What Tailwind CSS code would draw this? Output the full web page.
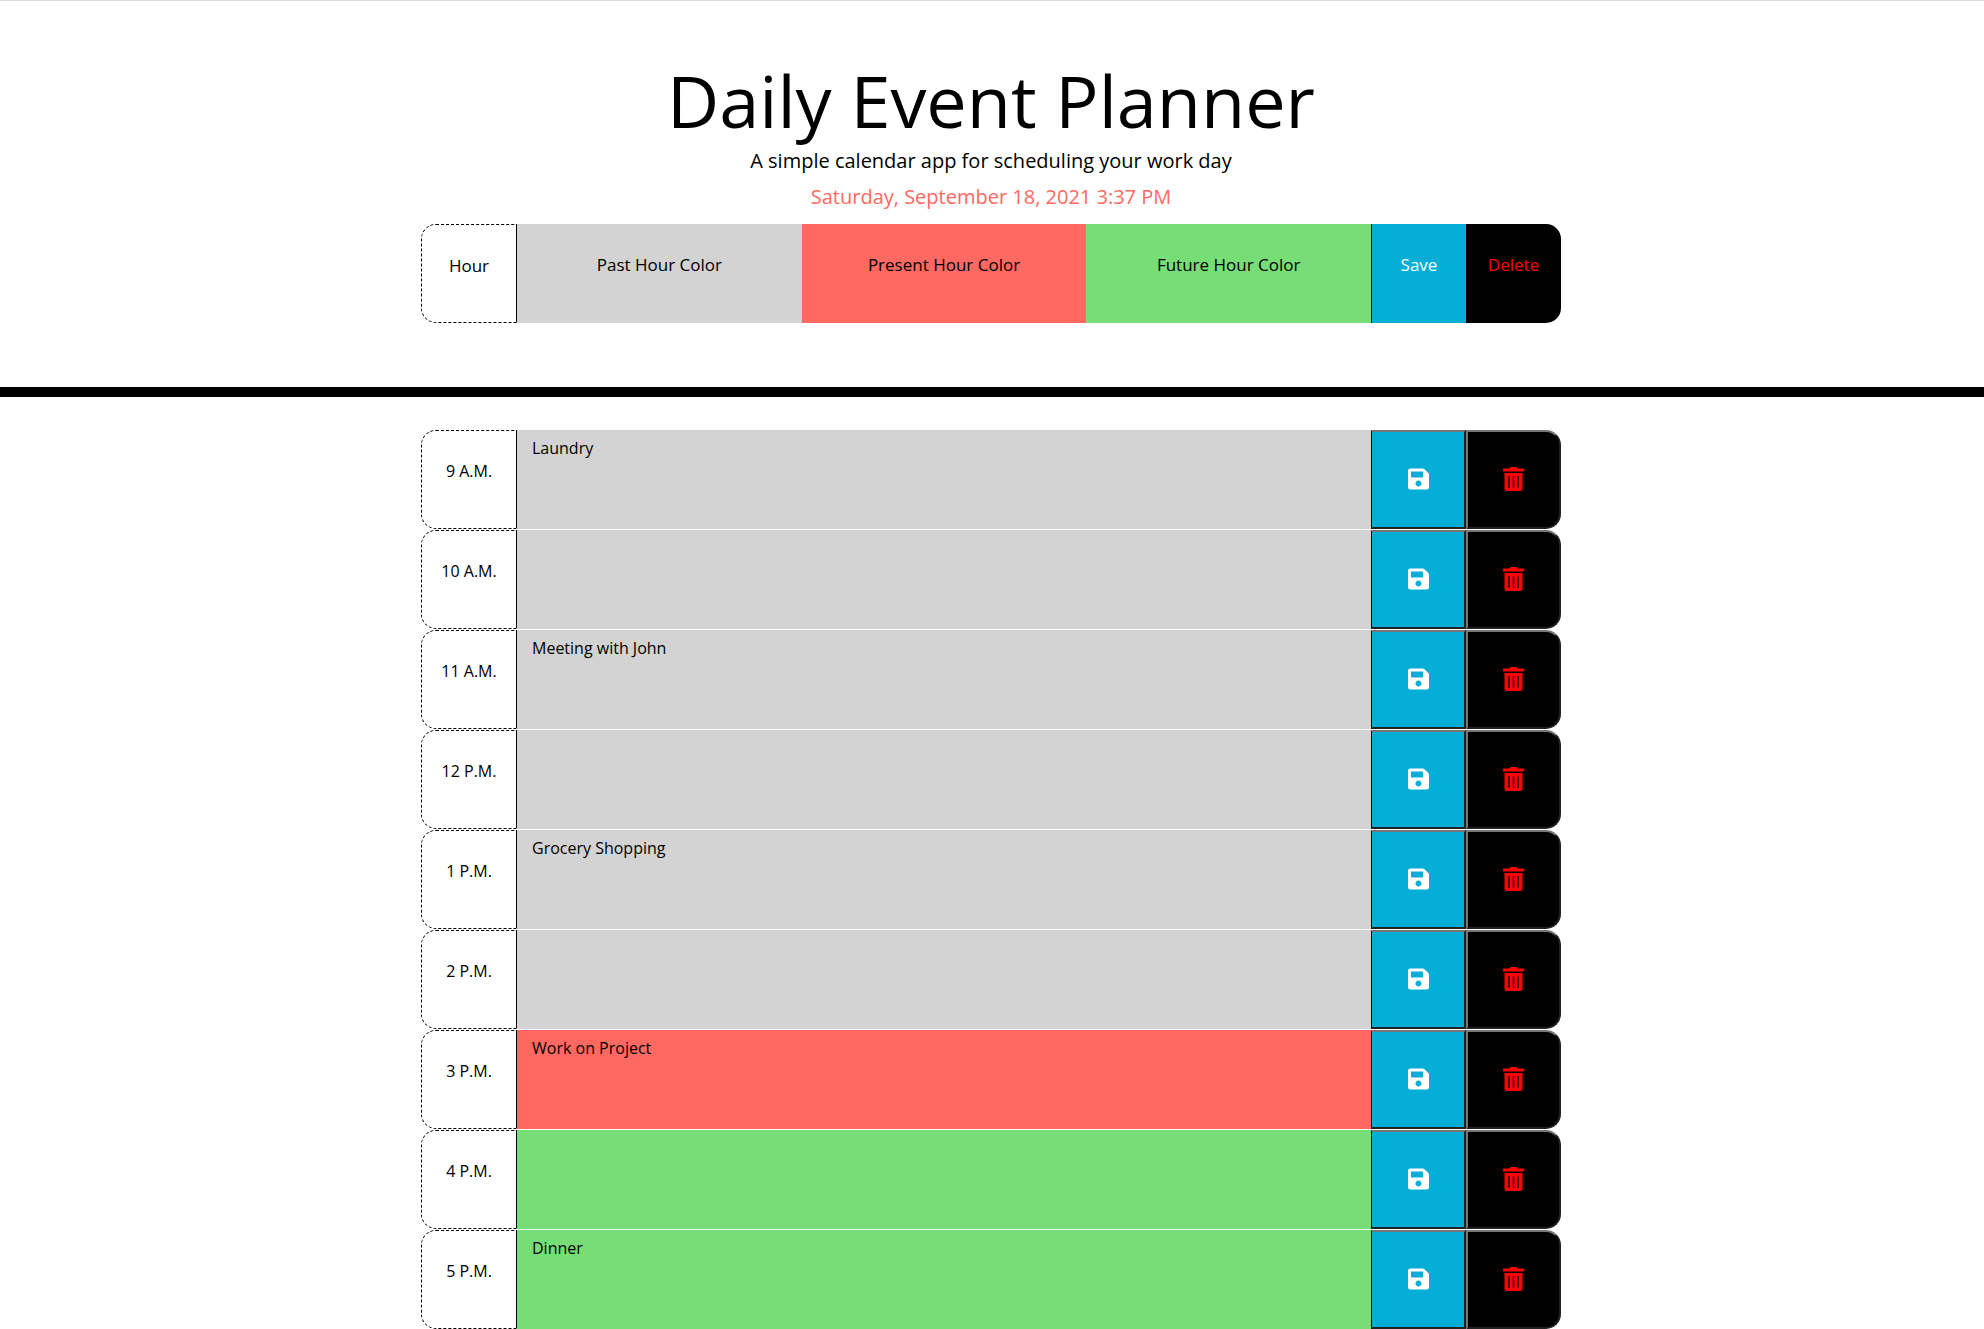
<!DOCTYPE html>
<html lang="en">
<head>
<meta charset="utf-8">
<meta name="viewport" content="width=device-width, initial-scale=1">
<title>Daily Event Planner</title>
<script src="https://cdn.jsdelivr.net/npm/@tailwindcss/browser@4"></script>
</head>
<body class="bg-white text-black font-['Open_Sans',sans-serif] text-base">
<svg class="hidden" aria-hidden="true">
  <symbol id="save" viewBox="0 0 448 512"><path d="M433.941 129.941l-83.882-83.882A48 48 0 0 0 316.118 32H48C21.49 32 0 53.49 0 80v352c0 26.51 21.49 48 48 48h352c26.51 0 48-21.49 48-48V163.882a48 48 0 0 0-14.059-33.941zM224 416c-35.346 0-64-28.654-64-64 0-35.346 28.654-64 64-64s64 28.654 64 64c0 35.346-28.654 64-64 64zm96-304.52V212c0 6.627-5.373 12-12 12H76c-6.627 0-12-5.373-12-12V108c0-6.627 5.373-12 12-12h228.52c3.183 0 6.235 1.264 8.485 3.515l3.48 3.48A11.996 11.996 0 0 1 320 111.48z"/></symbol>
  <symbol id="trash" viewBox="0 0 448 512"><path d="M32 464a48 48 0 0 0 48 48h288a48 48 0 0 0 48-48V128H32zm272-256a16 16 0 0 1 32 0v224a16 16 0 0 1-32 0zm-96 0a16 16 0 0 1 32 0v224a16 16 0 0 1-32 0zm-96 0a16 16 0 0 1 32 0v224a16 16 0 0 1-32 0zM432 32H312l-9.4-18.7A24 24 0 0 0 281.1 0H166.8a23.72 23.72 0 0 0-21.4 13.3L136 32H16A16 16 0 0 0 0 48v32a16 16 0 0 0 16 16h416a16 16 0 0 0 16-16V48a16 16 0 0 0-16-16z"/></symbol>
</svg>
<header class="border-t border-t-[#dadce0] border-b-[10px] border-b-black pt-[63px] pb-16 pl-4 pr-[18px] text-center">
  <h1 class="text-7xl leading-[72px]">Daily Event Planner</h1>
  <p class="mt-[10px] text-xl leading-[30px]">A simple calendar app for scheduling your work day</p>
  <p class="mt-[6px] text-xl leading-[30px] text-[#ff6961]">Saturday, September 18, 2021 3:37 PM</p>
  <div class="mx-auto mt-3 grid h-[99px] max-w-[1140px] grid-cols-[96px_repeat(3,1fr)_95px_95px] text-[17px] leading-6">
    <div class="rounded-l-[15px] border border-dashed border-black [border-right-style:solid] pt-[29px]">Hour</div>
    <div class="bg-[#d3d3d3] pt-[29px]">Past Hour Color</div>
    <div class="bg-[#ff6961] pt-[29px]">Present Hour Color</div>
    <div class="bg-[#77dd77] pt-[29px]">Future Hour Color</div>
    <div class="border-l border-black bg-[#06aed5] pt-[29px] font-medium text-white">Save</div>
    <div class="rounded-r-[15px] bg-black pt-[29px] text-[#ff0000]">Delete</div>
  </div>
</header>
<main class="pt-[33px] pl-4 pr-[18px]">
  <div id="rows" class="mx-auto grid max-w-[1140px] gap-px"></div>
</main>
<script>
const PAST = "bg-[#d3d3d3]", PRESENT = "bg-[#ff6961]", FUTURE = "bg-[#77dd77]";
const hours = [
  ["9 A.M.", "Laundry", PAST], ["10 A.M.", "", PAST], ["11 A.M.", "Meeting with John", PAST],
  ["12 P.M.", "", PAST], ["1 P.M.", "Grocery Shopping", PAST], ["2 P.M.", "", PAST],
  ["3 P.M.", "Work on Project", PRESENT], ["4 P.M.", "", FUTURE], ["5 P.M.", "Dinner", FUTURE]
];
document.getElementById("rows").innerHTML = hours.map(([hour, text, tone], i) => `
  <div class="grid h-[99px] grid-cols-[96px_1fr_95px_95px]">
    <label for="event-${i}" class="rounded-l-[15px] border border-dashed border-black [border-right-style:solid] pt-7 text-center leading-6">${hour}</label>
    <textarea id="event-${i}" class="block h-full w-full resize-none px-[15px] py-[6px] leading-6 outline-none ${tone}">${text}</textarea>
    <button type="button" aria-label="Save ${hour}" class="flex items-center justify-center border-2 border-l border-[#767676] border-l-black [border-style:outset] [border-left-style:solid] bg-[#06aed5] pb-[2px] text-white"><svg class="h-6 w-[21px] fill-current"><use href="#save"/></svg></button>
    <button type="button" aria-label="Delete ${hour}" class="flex items-center justify-center rounded-r-[15px] border-2 border-[#767676] [border-style:outset] bg-black pb-[2px] text-[#ff0000]"><svg class="h-6 w-[21px] fill-current"><use href="#trash"/></svg></button>
  </div>`).join("");
</script>
</body>
</html>
